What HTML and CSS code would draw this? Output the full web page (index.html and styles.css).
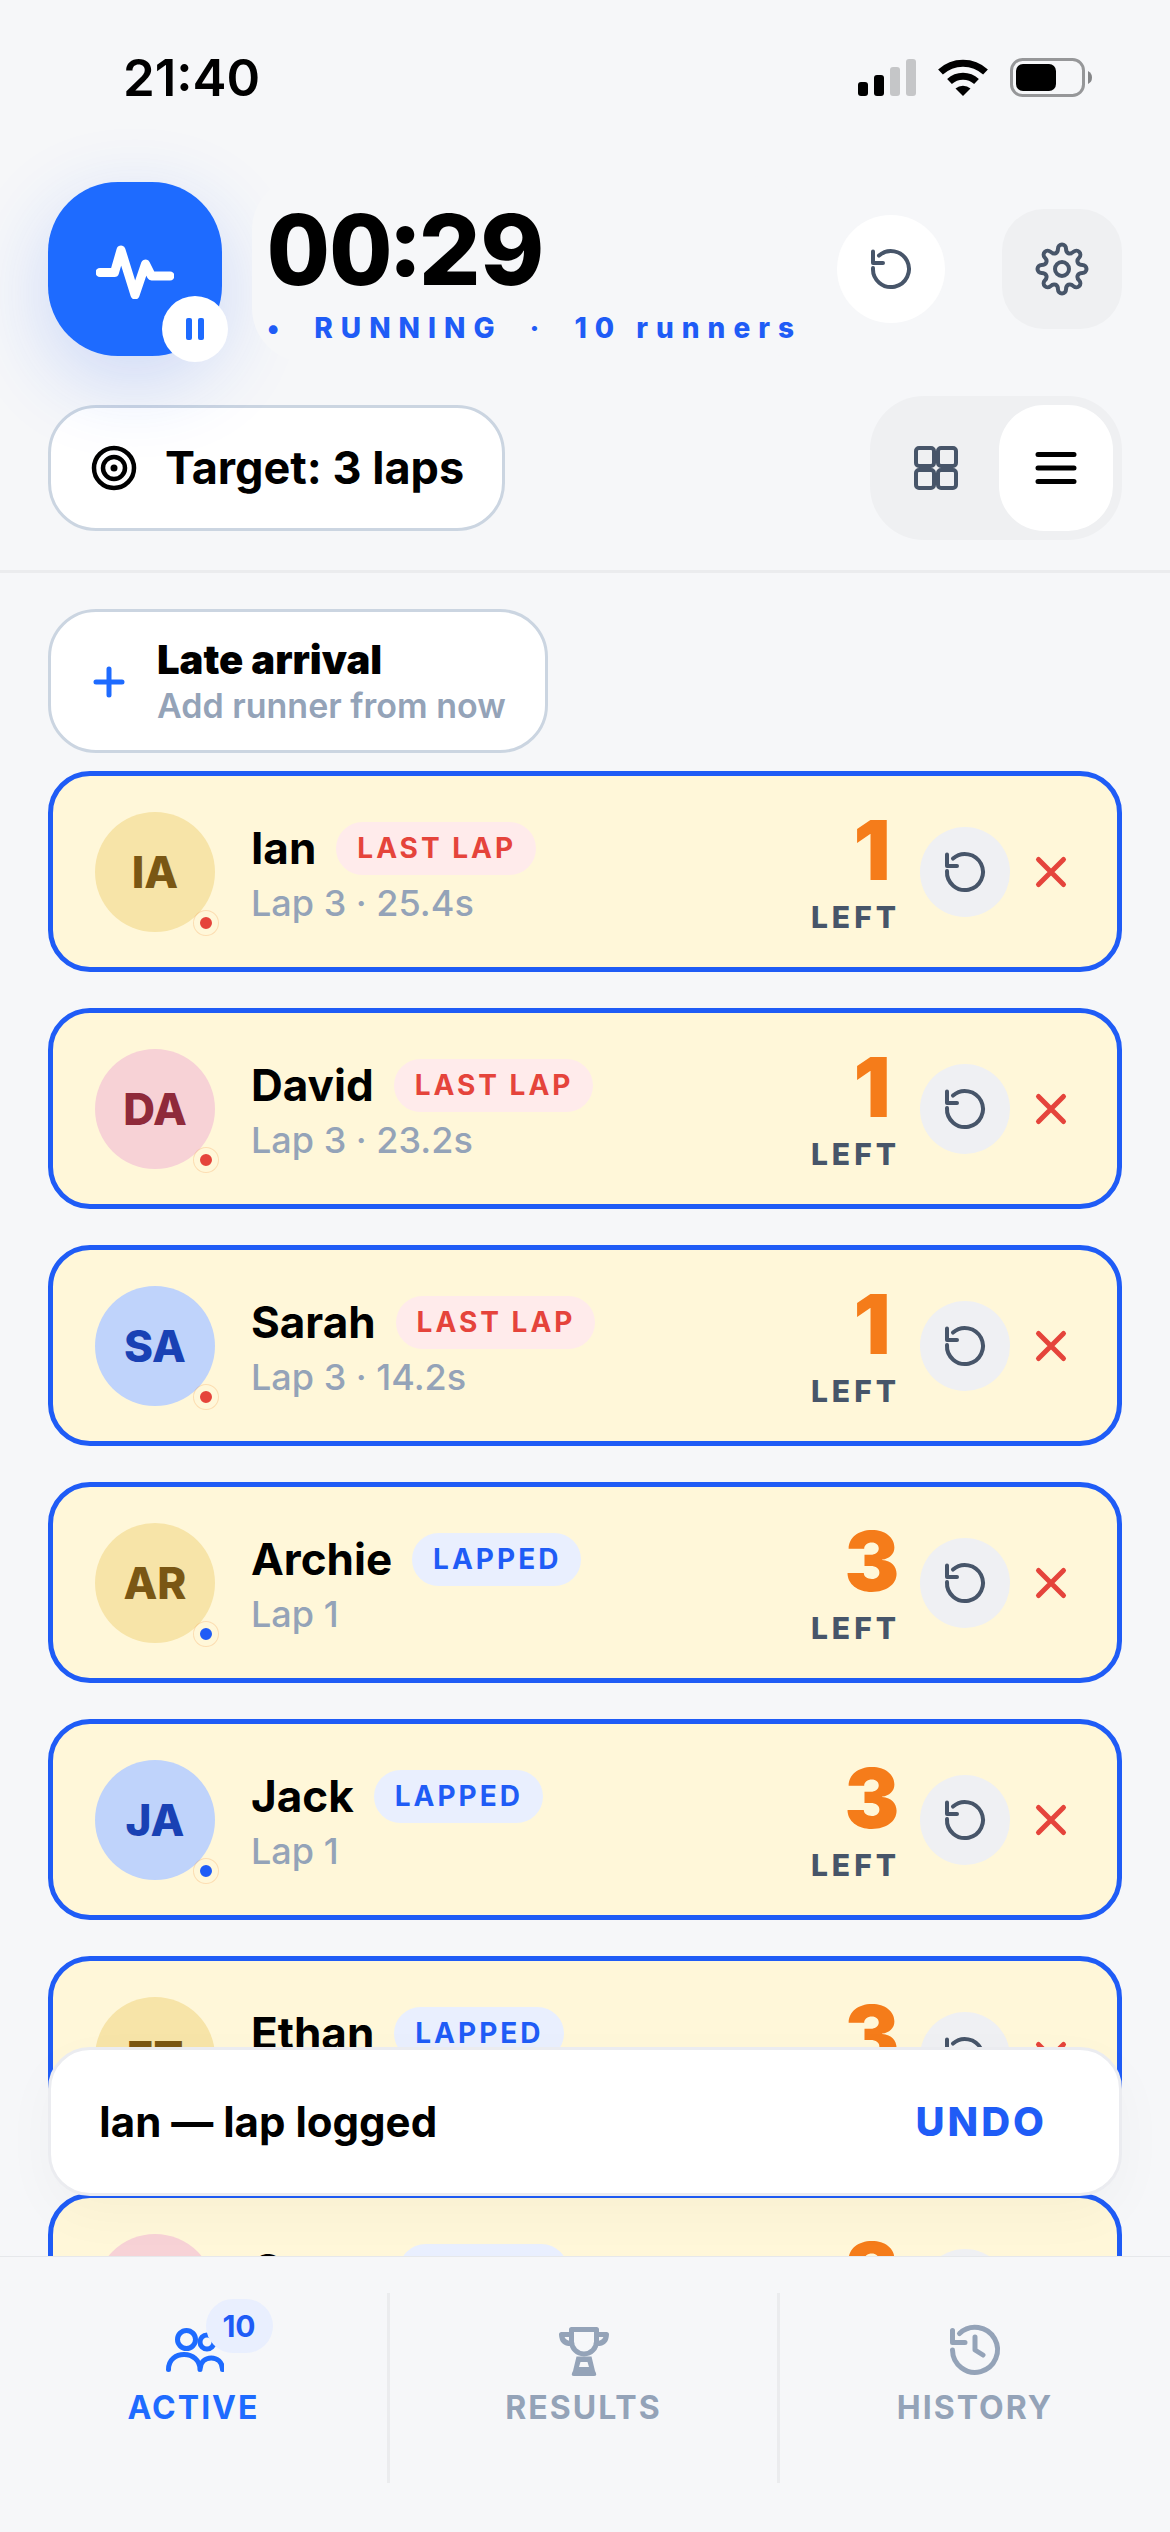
FILE: index.html
```html
<!DOCTYPE html>
<html lang="en">
<head>
<meta charset="utf-8">
<meta name="viewport" content="width=device-width, initial-scale=1">
<title>Lap timer</title>
<link rel="stylesheet" href="styles.css">
</head>
<body>
<svg class="symbols" aria-hidden="true">
  <symbol id="undo" viewBox="-24 -24 48 48"><path d="M-12-13.4A18 18 0 1 1-18-1M-18-17.500V-6H-8"/></symbol>
  <symbol id="close" viewBox="-24 -24 48 48"><path d="M-12.500-12.500 12.500 12.500M12.500-12.500-12.500 12.500"/></symbol>
</svg>
<div class="app">
  <div class="status">
    <time class="clock">21:40</time>
    <div class="signals">
      <svg width="58" height="40" viewBox="0 0 58 40"><rect y="24" width="10" height="14" rx="3"/><rect x="16" y="17" width="10" height="21" rx="3"/><g fill="#c5c6c8"><rect x="32" y="9" width="10" height="29" rx="3"/><rect x="48" y="1" width="10" height="37" rx="3"/></g></svg>
      <svg width="50" height="40" viewBox="0 0 50 40"><path d="M25 38 17.500 30.500A11.500 11.500 0 0 1 32.500 30.500Z"/><g fill="none" stroke="#000" stroke-width="7"><path d="M11.500 23.500A20 20 0 0 1 38.500 23.500"/><path d="M2.500 14A33 33 0 0 1 47.500 14"/></g></svg>
      <svg width="82" height="40" viewBox="0 0 82 40"><rect x="1.500" y="1.500" width="72" height="36" rx="11" fill="none" stroke="#969799" stroke-width="3"/><rect x="6" y="6" width="40" height="27" rx="7"/><path d="M78 13Q82 15 82 19.500T78 26Z" fill="#858688"/></svg>
    </div>
  </div>

  <header class="header">
    <div class="timer-row">
      <button class="logo" type="button" aria-label="Pause">
        <svg width="78" height="60" viewBox="-39 -30 78 60"><path d="M-35 3.500H-20.500L-14-19 0 26 10.500-5 16.500 7H35"/></svg>
        <span class="pause"><i></i><i></i></span>
      </button>
      <div class="timer">
        <div class="digits">00:29</div>
        <div class="state"><span>•</span><span>RUNNING</span><span>·</span><span>10 runners</span></div>
      </div>
      <div class="actions">
        <button class="reset" type="button" aria-label="Reset"><svg class="line" width="48" height="48"><use href="#undo"/></svg></button>
        <button class="settings" type="button" aria-label="Settings"><svg class="line gear" width="60" height="60" viewBox="-30 -30 60 60"><path d="M-4-20.500A4 4 0 0 1 4-20.500C4-15.500 8.100-13.800 11.670-17.320A4 4 0 0 1 17.320-11.670C13.800-8.100 15.500-4 20.500-4A4 4 0 0 1 20.500 4C15.500 4 13.800 8.100 17.320 11.670A4 4 0 0 1 11.670 17.320C8.100 13.800 4 15.500 4 20.500A4 4 0 0 1-4 20.500C-4 15.500-8.100 13.800-11.670 17.320A4 4 0 0 1-17.320 11.670C-13.800 8.100-15.500 4-20.500 4A4 4 0 0 1-20.500-4C-15.500-4-13.800-8.100-17.320-11.670A4 4 0 0 1-11.670-17.320C-8.100-13.800-4-15.500-4-20.500Z"/><circle r="7"/></svg></button>
      </div>
    </div>
    <div class="tools">
      <button class="chip target" type="button"><svg width="46" height="46" viewBox="-23 -23 46 46"><g fill="none" stroke="#000" stroke-width="4.500"><circle r="20"/><circle r="11"/></g><circle r="3.500"/></svg>Target: 3 laps</button>
      <div class="toggle">
        <button type="button" aria-label="Grid view"><svg class="line" width="48" height="48" viewBox="-24 -24 48 48"><rect x="-20" y="-20" width="18" height="18" rx="3"/><rect x="2" y="-20" width="18" height="18" rx="3"/><rect x="-20" y="2" width="18" height="18" rx="3"/><rect x="2" y="2" width="18" height="18" rx="3"/></svg></button>
        <button class="on" type="button" aria-label="List view"><svg class="line list-icon" width="48" height="48" viewBox="-24 -24 48 48"><path d="M-18-13.500H18M-18 0H18M-18 13.500H18"/></svg></button>
      </div>
    </div>
  </header>

  <main class="main">
    <button class="chip late" type="button">
      <svg width="36" height="36" viewBox="-18 -18 36 36"><path d="M-13 0H13M0-13V13"/></svg>
      <span class="late-text"><strong>Late arrival</strong><small>Add runner from now</small></span>
    </button>
    <ul class="runners">
      <li class="card"><span class="avatar amber">IA<i class="dot red"></i></span><div class="info"><div class="name">Ian<span class="badge last">LAST LAP</span></div><div class="lap">Lap 3 · 25.4s</div></div><div class="left"><b>1</b><span>LEFT</span></div><button class="undo" type="button" aria-label="Undo lap"><svg class="line" width="48" height="48"><use href="#undo"/></svg></button><button class="remove" type="button" aria-label="Remove"><svg width="48" height="48"><use href="#close"/></svg></button></li>
      <li class="card"><span class="avatar pink">DA<i class="dot red"></i></span><div class="info"><div class="name">David<span class="badge last">LAST LAP</span></div><div class="lap">Lap 3 · 23.2s</div></div><div class="left"><b>1</b><span>LEFT</span></div><button class="undo" type="button" aria-label="Undo lap"><svg class="line" width="48" height="48"><use href="#undo"/></svg></button><button class="remove" type="button" aria-label="Remove"><svg width="48" height="48"><use href="#close"/></svg></button></li>
      <li class="card"><span class="avatar blue">SA<i class="dot red"></i></span><div class="info"><div class="name">Sarah<span class="badge last">LAST LAP</span></div><div class="lap">Lap 3 · 14.2s</div></div><div class="left"><b>1</b><span>LEFT</span></div><button class="undo" type="button" aria-label="Undo lap"><svg class="line" width="48" height="48"><use href="#undo"/></svg></button><button class="remove" type="button" aria-label="Remove"><svg width="48" height="48"><use href="#close"/></svg></button></li>
      <li class="card"><span class="avatar amber">AR<i class="dot"></i></span><div class="info"><div class="name">Archie<span class="badge">LAPPED</span></div><div class="lap">Lap 1</div></div><div class="left"><b>3</b><span>LEFT</span></div><button class="undo" type="button" aria-label="Undo lap"><svg class="line" width="48" height="48"><use href="#undo"/></svg></button><button class="remove" type="button" aria-label="Remove"><svg width="48" height="48"><use href="#close"/></svg></button></li>
      <li class="card"><span class="avatar blue">JA<i class="dot"></i></span><div class="info"><div class="name">Jack<span class="badge">LAPPED</span></div><div class="lap">Lap 1</div></div><div class="left"><b>3</b><span>LEFT</span></div><button class="undo" type="button" aria-label="Undo lap"><svg class="line" width="48" height="48"><use href="#undo"/></svg></button><button class="remove" type="button" aria-label="Remove"><svg width="48" height="48"><use href="#close"/></svg></button></li>
      <li class="card"><span class="avatar amber">ET<i class="dot"></i></span><div class="info"><div class="name">Ethan<span class="badge">LAPPED</span></div><div class="lap">Lap 1</div></div><div class="left"><b>3</b><span>LEFT</span></div><button class="undo" type="button" aria-label="Undo lap"><svg class="line" width="48" height="48"><use href="#undo"/></svg></button><button class="remove" type="button" aria-label="Remove"><svg width="48" height="48"><use href="#close"/></svg></button></li>
      <li class="card"><span class="avatar pink">GR<i class="dot"></i></span><div class="info"><div class="name">Grace<span class="badge">LAPPED</span></div><div class="lap">Lap 1</div></div><div class="left"><b>3</b><span>LEFT</span></div><button class="undo" type="button" aria-label="Undo lap"><svg class="line" width="48" height="48"><use href="#undo"/></svg></button><button class="remove" type="button" aria-label="Remove"><svg width="48" height="48"><use href="#close"/></svg></button></li>
    </ul>
    <div class="toast" role="status"><span>Ian — lap logged</span><button type="button">UNDO</button></div>
  </main>

  <nav class="tabs">
    <a class="tab active" href="#active">
      <span class="tab-icon"><svg width="60" height="60" viewBox="-30 -30 60 60"><circle cx="-7.500" cy="-10.500" r="9"/><circle cx="13" cy="-8" r="7"/><path d="M-25.500 19.500C-25.500-1 6 0 6 19.500C6 4 28.500 4 28.500 19.500"/></svg><span class="count">10</span></span>
      ACTIVE
    </a>
    <a class="tab" href="#results">
      <span class="tab-icon"><svg width="60" height="60" viewBox="-30 -30 60 60"><path d="M-12.500-20.500H12.500V-8.500A12.500 12.500 0 0 1-12.500-8.500ZM-14-15.500H-22.500Q-22-6-12-6.500M14-15.500H22.500Q22-6 12-6.500"/><path class="solid" fill-rule="evenodd" d="M-7.500 6.500H7.500L11 21Q14 26 10 26H-10Q-14 26-11 21ZM-3.500 12 -5 17H5L3.500 12Z"/></svg></span>
      RESULTS
    </a>
    <a class="tab" href="#history">
      <span class="tab-icon"><svg width="60" height="60" viewBox="-30 -30 60 60"><path d="M-15.500-16.500A22.500 22.500 0 1 1-22.500 0M-22.500-19.500V-7.500H-10M0-13V0L8 5"/></svg></span>
      HISTORY
    </a>
  </nav>
</div>
</body>
</html>
```
FILE: styles.css
```css
* { box-sizing: border-box; }
body {
  margin: 0;
  background: #f6f7f9;
  color: #000;
  font-family: Inter, "Liberation Sans", sans-serif;
}
button { margin: 0; padding: 0; border: 0; background: none; color: inherit; font: inherit; }
svg { display: block; flex: none; }
.symbols { position: absolute; width: 0; height: 0; }

.app { display: flex; flex-direction: column; height: 100vh; overflow: hidden; }

.status { display: flex; justify-content: space-between; align-items: center; padding: 48px 78px 44px 123px; }
.clock { font-size: 51px; line-height: 60px; font-weight: 600; }
.signals { display: flex; align-items: center; gap: 22px; }

.header { padding: 30px 48px; border-bottom: 3px solid #ebecee; }
.timer-row { display: flex; align-items: center; gap: 30px; }
.logo {
  position: relative; display: grid; place-items: center; flex: none;
  width: 174px; height: 174px; border-radius: 70px;
  background: #1e6bff; box-shadow: 0 24px 84px rgba(31, 92, 246, .2);
}
.logo svg { fill: none; stroke: #fff; stroke-width: 9; stroke-linecap: round; stroke-linejoin: round; }
.pause {
  position: absolute; right: -6px; bottom: -6px;
  display: flex; align-items: center; justify-content: center; gap: 6px;
  width: 66px; height: 66px; border-radius: 50%; background: #fff;
}
.pause i { width: 6px; height: 22px; border-radius: 2px; background: #1e6bff; }
.timer {
  position: relative; flex: 1; display: flex; flex-direction: column; justify-content: center; gap: 8px;
  height: 186px; margin: -6px 0; padding-left: 15px; border-radius: 54px; background: #f6f7f9; white-space: nowrap;
}
.digits { font-size: 97px; line-height: 110px; font-weight: 800; font-feature-settings: "tnum"; }
.state { display: flex; gap: 27px; font-size: 28px; line-height: 30px; font-weight: 800; letter-spacing: 8px; color: #1f5cf6; }
.actions { display: flex; align-items: center; gap: 57px; }
.reset, .undo, .settings { display: grid; place-items: center; flex: none; }
.reset { width: 108px; height: 108px; border-radius: 50%; background: #fff; }
.settings { width: 120px; height: 120px; border-radius: 42px; background: #eff0f2; }
.line { fill: none; stroke: #475569; stroke-width: 4; stroke-linecap: round; stroke-linejoin: round; }
.list-icon { stroke: #000; stroke-width: 5; }

.tools { display: flex; justify-content: space-between; align-items: center; margin-top: 40px; }
.chip { display: flex; align-items: center; border: 3px solid #cbd5e1; border-radius: 48px; background: #fff; }
.target { gap: 28px; height: 126px; padding: 0 38px 0 40px; font-size: 45px; line-height: 52px; font-weight: 700; }
.toggle { display: flex; gap: 6px; padding: 9px; border-radius: 54px; background: #eff0f2; }
.toggle button { display: grid; place-items: center; width: 114px; height: 126px; border-radius: 45px; }
.toggle .on { background: #fff; }

.main { position: relative; flex: 1; min-height: 0; padding: 36px 48px 0; overflow: hidden; }
.late { gap: 30px; height: 144px; padding: 2px 39px 0 40px; text-align: left; white-space: nowrap; }
.late svg { stroke: #1e6bff; stroke-width: 5; stroke-linecap: round; }
.late-text { display: flex; flex-direction: column; }
.late strong { font-size: 40px; line-height: 48px; font-weight: 900; }
.late small { font-size: 34px; line-height: 44px; font-weight: 600; color: #94a3b8; }

.runners { display: flex; flex-direction: column; gap: 36px; margin: 18px 0 0; padding: 0; list-style: none; }
.card {
  display: flex; align-items: center; flex: none; height: 201px; padding: 0 42px;
  border: 5px solid #1f5cf6; border-radius: 42px; background: #fff7d9;
}
.avatar {
  position: relative; display: grid; place-items: center; flex: none;
  width: 120px; height: 120px; border-radius: 50%; font-size: 44px; font-weight: 800;
}
.amber { background: #f7e4a8; color: #7a5714; }
.pink { background: #f7d2d6; color: #8f2a3a; }
.blue { background: #bfd3fb; color: #1941b4; }
.dot {
  position: absolute; right: -3px; bottom: -3px; width: 24px; height: 24px;
  border: 6px solid #fff7d9; border-radius: 50%; background: #1f5cf6;
  box-shadow: 0 0 0 1px rgba(242, 122, 26, .2);
}
.red { background: #e5443b; }
.info { flex: 1; display: flex; flex-direction: column; gap: 6px; margin-left: 36px; padding-top: 3px; }
.name { display: flex; align-items: center; gap: 20px; font-size: 44px; line-height: 53px; font-weight: 700; }
.badge {
  padding: 0 20px 0 21px; border-radius: 27px; background: #e9effe; color: #1f5cf6;
  font-size: 28px; line-height: 53px; font-weight: 700; letter-spacing: 3px;
}
.last { background: #ffebeb; color: #e5443b; }
.lap { font-size: 36px; line-height: 44px; font-weight: 500; color: #94a3b8; }
.left { display: flex; flex-direction: column; align-items: flex-end; gap: 12px; margin-right: 20px; padding-top: 4px; }
.left b { min-width: 56px; font-size: 82px; line-height: 74px; font-weight: 900; text-align: center; color: #f57c1a; }
.left span { font-size: 30px; line-height: 34px; font-weight: 800; letter-spacing: 4px; color: #475569; }
.undo { width: 90px; height: 90px; border-radius: 50%; background: #eff0f3; }
.remove { margin-left: 17px; stroke: #e5443b; stroke-width: 5; stroke-linecap: round; }

.toast {
  position: absolute; left: 48px; right: 48px; bottom: 60px;
  display: flex; align-items: center; justify-content: space-between; height: 149px; padding: 0 72px 0 48px;
  border: 3px solid #ebecf0; border-radius: 42px; background: #fff; box-shadow: 0 18px 54px rgba(15, 23, 42, .03);
  font-size: 42px; font-weight: 700;
}
.toast button { font-size: 40px; font-weight: 800; letter-spacing: 3px; color: #1f5cf6; }

.tabs { display: grid; grid-template-columns: repeat(3, 1fr); flex: none; padding: 36px 0 49px; border-top: 1px solid #e6e8eb; }
.tab {
  display: flex; flex-direction: column; align-items: center; gap: 8px; height: 190px; padding-top: 27px;
  border-right: 3px solid #ebecee; font-size: 32px; line-height: 40px; font-weight: 700; letter-spacing: 2px;
  color: #94a3b8; text-decoration: none;
}
.tab:last-child { border-right: 0; }
.active { color: #1e6bff; }
.tab-icon { position: relative; }
.tab svg { fill: none; stroke: currentColor; stroke-width: 5; stroke-linecap: round; stroke-linejoin: round; }
.tab .solid { fill: currentColor; stroke: none; }
.count {
  position: absolute; left: 42px; top: -21px; min-width: 67px; border-radius: 27px; background: #e9effe;
  color: #1f5cf6; font-size: 30px; line-height: 54px; letter-spacing: 0; text-align: center;
}
```
